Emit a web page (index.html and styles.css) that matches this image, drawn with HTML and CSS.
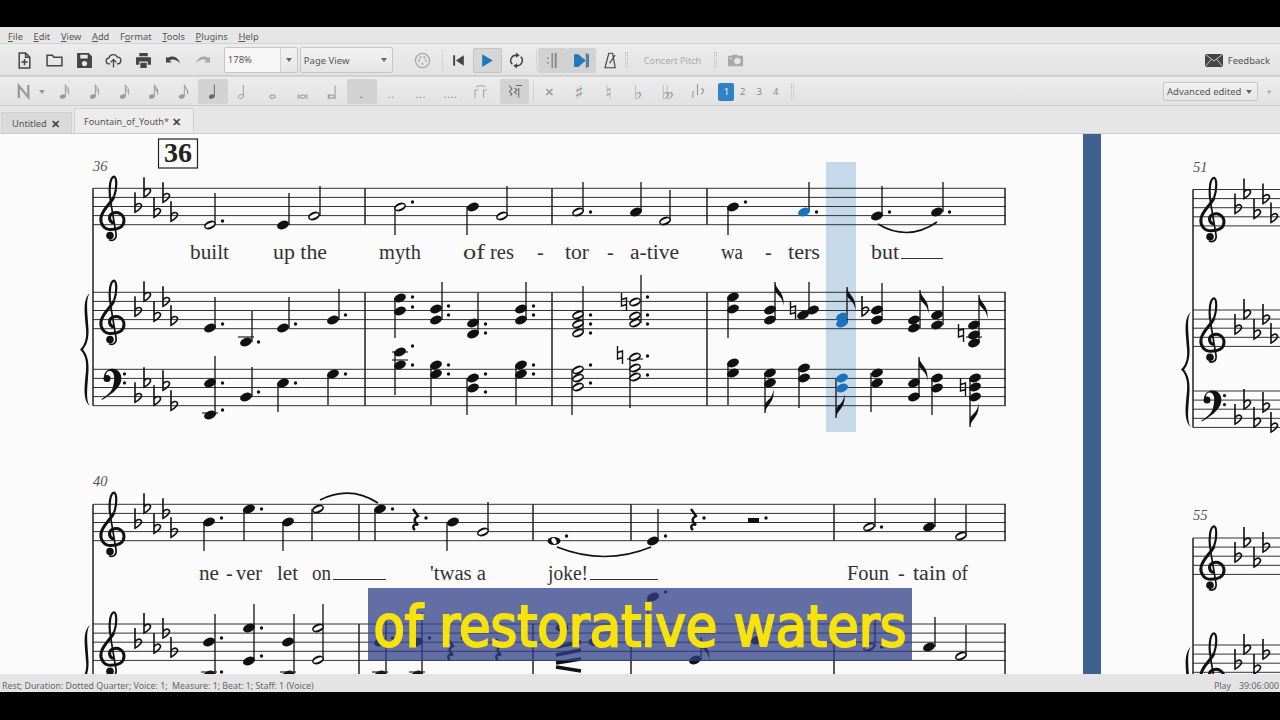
FILE: index.html
```html
<!DOCTYPE html>
<html lang="en">
<head>
    <meta charset="UTF-8">
    <title>Fountain_of_Youth</title>
    <link rel="stylesheet" href="styles.css">
</head>
<body>
    <!-- shared note parts for the palette icons -->
    <svg class="defs" width="0" height="0">
        <symbol id="q" viewBox="0 0 16 20"><ellipse cx="6" cy="16" rx="3.4" ry="2.5" transform="rotate(-20 6 16)" fill="currentColor"/><path d="M9 16V2" stroke="currentColor" stroke-width="1.1"/></symbol>
        <symbol id="h" viewBox="0 0 16 20"><ellipse cx="6" cy="16" rx="3.2" ry="2.2" transform="rotate(-20 6 16)" fill="none" stroke="currentColor"/><path d="M9 16V2" stroke="currentColor" stroke-width="1.1"/></symbol>
        <symbol id="f1" viewBox="0 0 16 20"><path d="M9 2c0 4 5 5 4 11" fill="none" stroke="currentColor" stroke-width="1.4"/></symbol>
        <symbol id="f2" viewBox="0 0 16 20"><path d="M9 2c0 3 5 4 4 9M9 5c0 3 5 4 4 9" fill="none" stroke="currentColor" stroke-width="1.2"/></symbol>
        <symbol id="f3" viewBox="0 0 16 20"><path d="M9 2c0 3 5 3 4 7M9 4.500c0 3 5 3 4 7M9 7c0 3 5 3 4 7" fill="none" stroke="currentColor"/></symbol>
        <symbol id="f4" viewBox="0 0 16 20"><path d="M9 2c0 2 5 3 4 6M9 4c0 2 5 3 4 6M9 6c0 2 5 3 4 6M9 8c0 2 5 3 4 6" fill="none" stroke="currentColor" stroke-width=".9"/></symbol>
    </svg>

    <div class="app">
        <div class="menuBar">
            <span><u>F</u>ile</span>
            <span><u>E</u>dit</span>
            <span><u>V</u>iew</span>
            <span><u>A</u>dd</span>
            <span>F<u>o</u>rmat</span>
            <span><u>T</u>ools</span>
            <span><u>P</u>lugins</span>
            <span><u>H</u>elp</span>
        </div>

        <div class="toolBar fileBar">
            <div class="group fileTools">
                <span class="tool"><svg viewBox="0 0 16 16"><path class="line" d="M3 1h6l4 4v10H3zM9 1v4h4M8 6.5v6M5 9.5h6"/></svg></span>
                <span class="tool"><svg viewBox="0 0 16 16"><path class="line" d="M1 3h5l1.5 2H15v8H1z"/></svg></span>
                <span class="tool"><svg viewBox="0 0 16 16"><path class="solid" fill-rule="evenodd" d="M1 1h11l3 3v11H1zM4 2.5V6h7V2.500zM8 8.500a2.500 2.500 0 1 0 .01 0z"/></svg></span>
                <span class="tool"><svg viewBox="0 0 18 16"><path class="line" d="M5.500 11.500H4.500a3 3 0 0 1-.5-6 4.800 4.800 0 0 1 9-1 3.500 3.500 0 0 1 .5 7h-1M9 15.500V7.500M6 10l3-3 3 3"/></svg></span>
                <span class="tool"><svg viewBox="0 0 16 16"><path class="solid" d="M4 1h8v3H4zM1 5h14v7h-3V9H4v3H1zM5 10h6v5H5z"/></svg></span>
                <span class="tool"><svg viewBox="0 0 18 16"><path class="solid" d="M1 4v6h6L5 8c3-2 7-1 11 3-2-7-8-9-13-6z"/></svg></span>
                <span class="tool off"><svg viewBox="0 0 18 16"><path class="solid" d="M17 4v6h-6l2-2C10 6 6 7 2 11c2-7 8-9 13-6z"/></svg></span>
            </div>
            <div class="combo zoomCombo"><span class="comboText">178%</span><span class="comboArrow"></span></div>
            <div class="combo viewCombo"><span class="comboText">Page View</span><span class="comboArrow"></span></div>
            <span class="tool midi off"><svg viewBox="0 0 18 18"><circle class="line" cx="9" cy="9" r="7.5"/><path class="solid" d="M4.500 8h2v2h-2zM11.500 8h2v2h-2zM6 4.500h2v2H6zM10 4.500h2v2h-2zM8 11.500h2v2H8z"/></svg></span>
            <i class="sep"></i>
            <span class="tool"><svg viewBox="0 0 16 16"><path class="solid" d="M3 3h1.800v10H3zM13 3v10L5.500 8z"/></svg></span>
            <span class="tool boxed"><svg viewBox="0 0 16 16"><path class="blue" d="M3 2l10 6-10 6z"/></svg></span>
            <span class="tool"><svg viewBox="0 0 16 16"><path class="line" d="M4 11.500A5 5 0 0 1 8 3M12 4.500A5 5 0 0 1 8 13"/><path class="solid" d="M7.500 .5L11 3 7.500 5.500zM8.500 10.500L5 13l3.500 2.500z"/></svg></span>
            <i class="sep"></i>
            <span class="tool pressed"><svg viewBox="0 0 16 16"><path class="grey" d="M3 5h1.500v1.500H3zM3 9.500h1.500V11H3zM7 1h1.500v14H7zM10 1h2v14h-2z"/></svg></span>
            <span class="tool pressed"><svg viewBox="0 0 16 16"><path class="blue" d="M1 2h4l7 6-7 6H1z"/><path class="solid" d="M12 1h1.500v14H12z"/><path class="blue" d="M13.500 2H15v12h-1.500z"/></svg></span>
            <span class="tool"><svg viewBox="0 0 16 20"><path class="line" d="M6 1.500h4.500l3 17h-12zM13.500 3.500L7 13"/></svg></span>
            <i class="handle"></i>
            <span class="pitchLabel">Concert Pitch</span>
            <i class="handle"></i>
            <span class="tool off cameraTool"><svg viewBox="0 0 18 16"><path class="solid" fill-rule="evenodd" d="M1 3h4l1-1h5l1 1h5v11H1zM11 5a3.500 3.500 0 1 0 .01 0zM3 5v1.500h2V5z"/></svg></span>
            <div class="feedback">
                <svg viewBox="0 0 18 13"><path class="solid" d="M0 0h18v13H0z"/><path class="crossing" d="M0 0l9 7 9-7M0 13l6.500-8M18 13l-6.500-8"/></svg>
                <span>Feedback</span>
            </div>
        </div>

        <div class="toolBar noteBar">
            <span class="tool inputTool"><svg viewBox="0 0 18 18"><path class="noteN" d="M3 16V3l10 12V2"/></svg></span>
            <span class="miniArrow"></span>
            <div class="group noteTools">
                <span class="tool"><svg viewBox="0 0 16 20"><use href="#q"/><use href="#f4"/></svg></span>
                <span class="tool"><svg viewBox="0 0 16 20"><use href="#q"/><use href="#f3"/></svg></span>
                <span class="tool"><svg viewBox="0 0 16 20"><use href="#q"/><use href="#f3"/></svg></span>
                <span class="tool"><svg viewBox="0 0 16 20"><use href="#q"/><use href="#f2"/></svg></span>
                <span class="tool"><svg viewBox="0 0 16 20"><use href="#q"/><use href="#f1"/></svg></span>
                <span class="tool pressed"><svg viewBox="0 0 16 20"><use href="#q"/></svg></span>
                <span class="tool"><svg viewBox="0 0 16 20"><use href="#h"/></svg></span>
                <span class="tool"><svg viewBox="0 0 16 20"><ellipse class="thin" cx="8" cy="16" rx="3.2" ry="1.9"/></svg></span>
                <span class="tool"><svg viewBox="0 0 16 20"><ellipse class="thin" cx="8" cy="16" rx="3.2" ry="1.9"/><path class="thin" d="M3 13v6M13 13v6"/></svg></span>
                <span class="tool"><svg viewBox="0 0 16 20"><ellipse class="thin" cx="7" cy="16" rx="3.2" ry="1.9"/><path class="thin" d="M3 13v6M11 3v16"/></svg></span>
                <span class="tool pressed"><b class="dots">.</b></span>
                <span class="tool"><b class="dots">..</b></span>
                <span class="tool"><b class="dots">...</b></span>
                <span class="tool"><b class="dots">....</b></span>
                <span class="tool"><svg viewBox="0 0 22 20"><path class="thin" d="M4 18V8h4M15 18V8h4M5 4c4-2 9-2 13 0"/></svg></span>
            </div>
            <span class="tool pressed restTool"><svg viewBox="0 0 20 18"><path class="thin" d="M4 2l3 4-3 3 3 3-2 2M10 5l3 2-3 3 3 2M12 2h7M15 5v11"/></svg></span>
            <i class="sep"></i>
            <div class="group noteTools">
                <span class="tool"><span class="accidental small">×</span></span>
                <span class="tool"><span class="accidental">♯</span></span>
                <span class="tool"><span class="accidental">♮</span></span>
                <span class="tool"><span class="accidental">♭</span></span>
                <span class="tool"><span class="accidental tight">♭♭</span></span>
                <span class="tool"><svg viewBox="0 0 18 18"><path class="thin" d="M4 10v6M4 10l1.5-1M9 1v12M13 6c3 0 3 4 0 6"/></svg></span>
            </div>
            <div class="voices">
                <span class="voice current">1</span>
                <span class="voice">2</span>
                <span class="voice">3</span>
                <span class="voice">4</span>
            </div>
            <i class="handle"></i>
            <div class="combo workspaceCombo"><span class="comboText">Advanced edited</span><span class="comboArrow"></span></div>
            <span class="plus">+</span>
        </div>

        <div class="tabBar">
            <div class="tab">Untitled <span class="close">✕</span></div>
            <div class="tab active">Fountain_of_Youth* <span class="close">✕</span></div>
        </div>

        <div class="score">
            <svg class="sheet" width="1280" height="540" viewBox="0 134 1280 540">
                <!-- playback cursor and page gap -->
                <rect class="cursor" x="826" y="162" width="30" height="270"/>
                <rect class="pageGap" x="1083" y="134" width="18" height="540"/>

                <g id="music"></g>

                <rect class="rehearsal" x="158.5" y="139" width="39" height="29"/>
                <text class="rehearsalNum" x="178" y="162" text-anchor="middle">36</text>
                <text class="measureNum" x="93" y="170.5">36</text>
                <text class="measureNum" x="93" y="486">40</text>
                <text class="measureNum" x="1193" y="172">51</text>
                <text class="measureNum" x="1193" y="520">55</text>

                <g class="lyrics">
                    <text x="190" y="258.5" textLength="39" lengthAdjust="spacingAndGlyphs">built</text>
                    <text x="273" y="258.5" textLength="54" lengthAdjust="spacingAndGlyphs">up the</text>
                    <text x="379" y="258.5" textLength="42" lengthAdjust="spacingAndGlyphs">myth</text>
                    <text x="463" y="258.5" textLength="22" lengthAdjust="spacingAndGlyphs">of</text>
                    <text x="490" y="258.5" textLength="24" lengthAdjust="spacingAndGlyphs">res</text>
                    <text x="537" y="258.5">-</text>
                    <text x="565" y="258.5" textLength="24" lengthAdjust="spacingAndGlyphs">tor</text>
                    <text x="607" y="258.5">-</text>
                    <text x="630" y="258.5" textLength="49" lengthAdjust="spacingAndGlyphs">a-tive</text>
                    <text x="721" y="258.5" textLength="22" lengthAdjust="spacingAndGlyphs">wa</text>
                    <text x="765" y="258.5">-</text>
                    <text x="788" y="258.5" textLength="32" lengthAdjust="spacingAndGlyphs">ters</text>
                    <text x="871" y="258.5" textLength="28" lengthAdjust="spacingAndGlyphs">but</text>

                    <text x="199" y="580" textLength="20" lengthAdjust="spacingAndGlyphs">ne</text>
                    <text x="226" y="580">-</text>
                    <text x="236" y="580" textLength="26" lengthAdjust="spacingAndGlyphs">ver</text>
                    <text x="277" y="580" textLength="21" lengthAdjust="spacingAndGlyphs">let</text>
                    <text x="312" y="580" textLength="19" lengthAdjust="spacingAndGlyphs">on</text>
                    <text x="430" y="580" textLength="56" lengthAdjust="spacingAndGlyphs">'twas a</text>
                    <text x="548" y="580" textLength="40" lengthAdjust="spacingAndGlyphs">joke!</text>
                    <text x="847" y="580" textLength="42" lengthAdjust="spacingAndGlyphs">Foun</text>
                    <text x="898" y="580">-</text>
                    <text x="913" y="580" textLength="33" lengthAdjust="spacingAndGlyphs">tain</text>
                    <text x="952" y="580" textLength="16" lengthAdjust="spacingAndGlyphs">of</text>
                </g>
                <path class="extender" d="M901 258.500h42M333 579.500h53M590 579.500h68"/>
            </svg>

            <div class="caption"><span>of restorative waters</span></div>
        </div>

        <div class="statusBar">
            <span>Rest; Duration: Dotted Quarter; Voice: 1;&nbsp; Measure: 1; Beat: 1; Staff: 1 (Voice)</span>
            <span class="playState">Play</span>
            <span>39:06:000</span>
        </div>
    </div>

    <script src="score.js"></script>
</body>
</html>
```

FILE: styles.css
```css
* {
    box-sizing: border-box;
}

body {
    margin: 0;
    background-color: #000;
    font-family: "Noto Sans", sans-serif;
    overflow: hidden;
}

.defs {
    position: absolute;
}

.app {
    display: flex;
    flex-direction: column;
    height: 665px;
    margin-top: 27px;
    background-color: #e6e6e6;
}

.menuBar {
    display: flex;
    align-items: center;
    gap: 10.7px;
    height: 16px;
    padding: 2px 0 0 8px;
    font-size: 9.3px;
    color: #555;
}

.toolBar {
    display: flex;
    align-items: center;
    background: linear-gradient(#ececec, #e2e2e2);
    border-top: 1px solid #d4d4d4;
    border-bottom: 1px solid #cdcdcd;
}

.fileBar {
    height: 33px;
    padding: 1px 0 0 10px;
}

.noteBar {
    height: 30px;
    padding: 1px 0 0 10px;
}

.group {
    display: flex;
    align-items: center;
}

.tool {
    display: flex;
    flex: none;
    justify-content: center;
    align-items: center;
    width: 29px;
    height: 25px;
    color: #444;
    border-radius: 2px;
}

.tool svg {
    width: 17px;
    height: 17px;
}

.fileTools .tool,
.noteTools .tool {
    width: 29.7px;
}

.off {
    color: #a9a9a9;
}

.boxed {
    background-color: #d6d6d6;
    border: 1px solid #c4c4c4;
}

.pressed {
    background-color: #d2d2d2;
    color: #777;
}

.line {
    fill: none;
    stroke: currentColor;
    stroke-width: 1.4;
}

.solid {
    fill: currentColor;
}

.crossing {
    fill: none;
    stroke: #e6e6e6;
    stroke-width: .8;
}

.blue {
    fill: #1f78b8;
}

.grey {
    fill: #8c8c8c;
}

.sep {
    flex: none;
    width: 1px;
    height: 20px;
    margin: 0 1px 0 5px;
    background-color: #d2d2d2;
}

.handle {
    flex: none;
    width: 3px;
    height: 16px;
    border-left: 1px dotted #bbb;
    border-right: 1px dotted #bbb;
}

.combo {
    display: flex;
    flex: none;
    align-items: center;
    background: linear-gradient(#f1f1f1, #e6e6e6);
    border: 1px solid #c6c6c6;
    border-radius: 2px;
    font-size: 9.5px;
    color: #555;
}

.comboText {
    flex: 1;
    padding-left: 3px;
}

.comboArrow {
    width: 0;
    height: 0;
    margin-right: 5px;
    border-left: 3px solid transparent;
    border-right: 3px solid transparent;
    border-top: 4px solid #666;
}

.zoomCombo {
    width: 74px;
    height: 26px;
    margin-left: 6px;
}

.zoomCombo .comboText {
    height: 100%;
    line-height: 23px;
    margin-right: 5px;
    background-color: #f6f6f6;
    border-right: 1px solid #d0d0d0;
}

.viewCombo {
    width: 93px;
    height: 26px;
    margin-left: 2px;
}

.midi {
    margin-left: 15px;
}

.pitchLabel {
    margin: 0 13px 0 16px;
    font-size: 9.2px;
    color: #aaa;
}

.cameraTool {
    margin-left: 4px;
}

.feedback {
    display: flex;
    align-items: center;
    gap: 5px;
    margin-left: auto;
    padding-right: 10px;
    font-size: 9.5px;
    color: #555;
}

.feedback svg {
    width: 18px;
    height: 13px;
    color: #444;
}

.inputTool {
    width: 29px;
}

.noteN {
    fill: none;
    stroke: #999;
    stroke-width: 2.4;
}

.miniArrow {
    flex: none;
    width: 0;
    height: 0;
    margin-right: 5px;
    border-left: 3px solid transparent;
    border-right: 3px solid transparent;
    border-top: 4px solid #999;
}

.thin {
    fill: none;
    stroke: currentColor;
    stroke-width: 1.2;
}

.noteBar .tool {
    color: #999;
}

.noteBar .pressed {
    color: #666;
}

.noteBar .sep {
    margin: 0 0 0 4px;
}

.dots {
    align-self: flex-end;
    margin-bottom: 3px;
    font-size: 9px;
    letter-spacing: 1px;
    line-height: 12px;
}

.accidental {
    font-family: "DejaVu Sans", sans-serif;
    font-size: 19px;
}

.tight {
    margin-left: -5px;
    letter-spacing: -5px;
}

.small {
    font-size: 12px;
    font-weight: bold;
}

.restTool {
    margin-left: 5px;
}

.voices {
    display: flex;
    margin: 0 7px 0 6px;
}

.voice {
    width: 16.5px;
    height: 18px;
    line-height: 18px;
    text-align: center;
    font-size: 9.5px;
    color: #888;
}

.current {
    width: 16px;
    background-color: #2f82c4;
    border-radius: 2px;
    color: #e8f2fa;
}

.workspaceCombo {
    width: 95px;
    height: 19px;
    margin-left: auto;
}

.plus {
    width: 22px;
    text-align: center;
    font-size: 9px;
    color: #888;
}

.tabBar {
    display: flex;
    align-items: flex-end;
    gap: 2px;
    height: 28px;
    padding-left: 1px;
    border-bottom: 1px solid #cbcbcb;
    font-size: 9.2px;
    color: #555;
}

.tab {
    display: flex;
    justify-content: space-between;
    align-items: center;
    width: 71px;
    height: 21px;
    padding: 0 11px 0 10px;
    background-color: #dadada;
    border: 1px solid #d0d0d0;
    border-bottom: none;
}

.active {
    width: 120px;
    height: 25px;
    padding: 0 12px 0 9px;
    background-color: #ececec;
}

.close {
    font-size: 11px;
    font-weight: bold;
    color: #444;
}

.score {
    position: relative;
    flex: none;
    width: 1280px;
    height: 540px;
    background-color: #fbfbfb;
}

.sheet {
    display: block;
}

.cursor {
    fill: #c5d9ea;
}

.pageGap {
    fill: #3e618f;
}

.rehearsal {
    fill: none;
    stroke: #222;
    stroke-width: 1.2;
}

.rehearsalNum {
    font-family: "Liberation Serif", serif;
    font-size: 28px;
    font-weight: bold;
    fill: #222;
}

.measureNum {
    font-family: "Liberation Serif", serif;
    font-size: 14.5px;
    font-style: italic;
    fill: #555;
}

.lyrics {
    font-family: "Liberation Serif", serif;
    font-size: 20px;
    fill: #333;
}

.extender {
    stroke: #333;
    stroke-width: 1;
}

.caption {
    position: absolute;
    top: 454px;
    left: 368px;
    display: flex;
    justify-content: center;
    align-items: center;
    width: 544px;
    height: 73px;
    padding-top: 3px;
    background-color: rgba(48, 64, 135, 0.75);
    font-family: "DejaVu Sans", sans-serif;
    font-size: 57px;
    font-stretch: condensed;
    line-height: 70px;
    white-space: nowrap;
    color: #f8e20c;
    -webkit-text-stroke: 2px #f8e20c;
}

.statusBar {
    display: flex;
    align-items: center;
    height: 18px;
    padding: 5px 1px 0 2px;
    background-color: #e4e4e4;
    font-size: 8.8px;
    color: #666;
}

.playState {
    margin-left: auto;
    margin-right: 8px;
}
```

FILE: score.js
```js
// Draws staves and notes into the sheet, everything in screen coordinates
const GAP = 9.1;
const INK = "#111";
const BLUE = "#1b73bd";
let out = "";

function staff(x1, x2, top) {
    for (let i = 0; i < 5; i++) {
        const y = top + i * GAP;
        out += `<path d="M${x1} ${y}H${x2}" stroke="#333" stroke-width="1"/>`;
    }
}

function bar(x, y1, y2, w = 1.5) {
    out += `<path d="M${x} ${y1}V${y2}" stroke="#222" stroke-width="${w}"/>`;
}

function treble(x, top) {
    const y = top + 3 * GAP;
    out += `<g transform="translate(${x} ${y})" fill="none" stroke="${INK}">
        <path stroke-width="3" d="M1 7C-4 7-5 0-1-2C5-5 11-1 11 5C11 12 4 14-2 14C-9 14-13 8-12 2C-11-6-2-12 1-19"/>
        <path stroke-width="2.2" d="M1-19C4-27 4-38 1-39C-3-38-4-28-3-18"/>
        <path stroke-width="1.7" d="M-3-18L3 18C4 24-1 26-4 24"/>
        <circle cx="-3" cy="20" r="3.8" fill="${INK}" stroke="none"/></g>`;
}

function bass(x, top) {
    const y = top + GAP;
    out += `<g transform="translate(${x} ${y})">
        <path d="M1-1C1-9 9-11 13-9C20-6 20 4 14 10C10 15 4 18-1 21.5L-1.5 20.5C4 17 9 13 10 8C12 1 12-7 7-7.5C4-7.8 3-5 3-3Z" fill="${INK}"/>
        <circle cx="4" cy="0" r="3.5" fill="${INK}"/>
        <circle cx="21.5" cy="-4.5" r="1.6" fill="${INK}"/><circle cx="21.5" cy="4.5" r="1.6" fill="${INK}"/></g>`;
}

function flat(x, y) {
    out += `<path d="M${x - 3} ${y - 15}V${y + 5}C${x + 1} ${y + 3} ${x + 5} ${y - 1} ${x + 3} ${y - 3}C${x + 1} ${y - 5} ${x - 2} ${y - 3} ${x - 3} ${y - 1}" fill="none" stroke="${INK}" stroke-width="1.6"/>`;
}

function keySig(x0, top, isBass, count = 5) {
    const xs = [45, 54, 64, 73, 81];
    const ys = isBass ? [28, 13, 31, 16, 36] : [19, 4, 24, 9, 28];
    for (let i = 0; i < count; i++) flat(x0 + xs[i], top + ys[i]);
}

function natural(x, y) {
    out += `<path d="M${x - 2.5} ${y - 9}V${y + 4}L${x + 2.5} ${y + 2.5}M${x + 2.5} ${y + 9}V${y - 4}L${x - 2.5} ${y - 2.5}" fill="none" stroke="${INK}" stroke-width="1.4"/>`;
}

// kind: "q" filled, "h" half, "w" whole
function head(x, y, kind, color) {
    if (kind == "w") {
        out += `<ellipse cx="${x}" cy="${y}" rx="6.5" ry="4" fill="${color}"/>
            <ellipse cx="${x}" cy="${y}" rx="2.2" ry="3.3" transform="rotate(-30 ${x} ${y})" fill="#fbfbfb"/>`;
        return;
    }
    out += `<ellipse cx="${x}" cy="${y}" rx="6.2" ry="4" transform="rotate(-22 ${x} ${y})" fill="${color}"/>`;
    if (kind == "h") {
        out += `<ellipse cx="${x}" cy="${y}" rx="4.8" ry="1.9" transform="rotate(-25 ${x} ${y})" fill="#fbfbfb"/>`;
    }
}

function dot(x, y) {
    out += `<circle cx="${x}" cy="${y}" r="1.7" fill="${INK}"/>`;
}

// heads at x, stem from stemX to stemEnd, dots given by their y
function note(x, ys, stemX, stemEnd, dots = [], kind = "q", color = INK) {
    if (stemX) {
        const near = stemEnd < ys[0] ? Math.max(...ys) : Math.min(...ys);
        out += `<path d="M${stemX} ${near}V${stemEnd}" stroke="${INK}" stroke-width="1.3"/>`;
    }
    ys.forEach(y => head(x, y, kind, color));
    dots.forEach(y => dot(x + 12.5, y));
}

function flag(x, y, dir) {
    out += `<path d="M${x} ${y}C${x + 1} ${y + dir * 8} ${x + 10} ${y + dir * 10} ${x + 8.5} ${y + dir * 24}C${x + 8} ${y + dir * 15} ${x + 2} ${y + dir * 13} ${x} ${y + dir * 9}Z" fill="${INK}"/>`;
}

function ledger(x, y, half = 8) {
    out += `<path d="M${x - half} ${y}H${x + half}" stroke="#222" stroke-width="1.2"/>`;
}

function rest(x, y) {
    out += `<path d="M${x - 2} ${y - 11}L${x + 3} ${y - 4}C${x - 2} ${y - 1} ${x - 1} ${y + 1} ${x + 3} ${y + 5}C${x - 2} ${y + 3} ${x - 3} ${y + 8} ${x} ${y + 10}" fill="none" stroke="${INK}" stroke-width="2.4"/>`;
}

function tie(d) {
    out += `<path d="${d}" fill="none" stroke="${INK}" stroke-width="1.6"/>`;
}

function brace(x, y, h) {
    const s = h / 113;
    out += `<path transform="translate(${x} ${y}) scale(1 ${s})" d="M10 0C2 6 5 22 6 36C7 46 4 53 0 56.5C4 60 7 67 6 77C5 91 2 107 10 113C5 107 8 91 8.5 77C9 66 6 60 3 56.5C6 53 9 47 8.5 36C8 22 5 6 10 0Z" fill="${INK}"/>`;
}

function systemHead(x0, tops, kinds, count) {
    tops.forEach((top, i) => {
        if (kinds[i] == "b") bass(x0 + 10, top);
        else treble(x0 + 20, top);
        keySig(x0, top, kinds[i] == "b", count);
    });
}

/* ---------- first system, bars 36-39 ---------- */
const V1 = 188.3, P1 = 292.3, B1 = 369.3;
staff(93, 1006, V1);
staff(93, 1006, P1);
staff(93, 1006, B1);
bar(93, V1, B1 + 36.4);
[365, 552, 707, 1005].forEach(x => {
    bar(x, V1, V1 + 36.4);
    bar(x, P1, B1 + 36.4);
});
brace(80, 293, 113);
systemHead(93, [V1, P1, B1], ["t", "t", "b"]);

// voice
note(210, [225], 215, 193, [221], "h");
note(283, [225], 289, 193);
note(314, [216], 320, 186, [], "h");
note(400, [207], 395, 235, [202], "h");
note(473, [207], 467, 235);
note(502, [216], 507, 186, [], "h");
note(578, [212], 583, 182, [212], "h");
note(636, [212], 641, 182);
note(665, [221], 670, 190, [], "h");
note(733, [207], 728, 235, [202]);
note(804, [212], 809, 182, [212], "q", BLUE);
note(877, [216], 882, 186, [212]);
note(937, [212], 943, 182, [212]);
tie("M878 224Q908 242 937 222");

// piano right hand
note(210, [328], 215, 297, [324]);
ledger(246, 337);
note(246, [342], 252, 311, [342]);
note(283, [328], 289, 297, [324]);
note(333, [320], 339, 289, [315]);
note(400, [298, 311], 395, 338, [297, 307]);
note(436, [309, 320], 442, 282, [306, 315]);
note(473, [323, 334], 478, 293, [324, 333]);
note(521, [309, 320], 526, 282, [306, 315]);
note(578, [315, 324, 333], 583, 286, [315, 324, 333], "h");
natural(624, 302);
note(635, [302, 316, 323], 641, 275, [297, 315, 324], "h");
note(733, [297, 309], 728, 338);
note(770, [310, 320], 775, 282);
flag(775, 282, 1);
natural(793, 310);
note(803, [315], 0, 0);
note(813, [310], 809, 282);
note(842, [317, 323], 847, 287, [], "q", BLUE);
flag(847, 287, 1);
flat(865, 311);
note(877, [310, 320], 882, 283);
note(914, [320, 328], 920, 290);
flag(920, 290, 1);
note(937, [315, 325], 943, 286);
natural(961, 333);
ledger(974, 337);
note(974, [325, 335, 343], 979, 295);
flag(979, 295, 1);

// piano left hand
ledger(210, 413);
note(210, [383, 415], 215, 356, [383, 410]);
note(246, [397], 252, 367, [392]);
note(283, [383], 278, 412, [383]);
note(333, [374], 328, 405, [374]);
ledger(400, 352);
ledger(400, 360);
note(400, [352, 365], 395, 395, [346, 365]);
note(436, [365, 374], 431, 405, [365, 374]);
note(473, [378, 388], 467, 415, [374, 392]);
note(521, [365, 374], 516, 405, [365, 374]);
note(578, [370, 378, 387], 572, 415, [365, 383], "h");
natural(620, 355);
ledger(635, 359);
note(635, [357, 368, 377], 630, 408, [356, 375], "h");
note(733, [363, 373], 728, 405);
note(770, [373, 383], 765, 413);
flag(765, 413, -1);
note(804, [368, 378], 799, 408);
note(842, [378, 388], 836, 418, [], "q", BLUE);
flag(836, 418, -1);
note(877, [373, 383], 871, 412);
note(914, [383, 397], 919, 357);
flag(919, 357, 1);
note(937, [378, 388], 932, 415);
natural(963, 387);
note(975, [378, 387, 397], 970, 427);
flag(970, 427, -1);

/* ---------- second system, bars 40-45 ---------- */
const V2 = 504.3, P2 = 624;
staff(93, 1006, V2);
staff(93, 1006, P2);
bar(93, V2, 674);
[359, 533, 631, 834, 1005].forEach(x => {
    bar(x, V2, V2 + 36.4);
    bar(x, P2, 674);
});
brace(80, 625, 113);
systemHead(93, [V2, P2], ["t", "t"]);

// voice
note(209, [522], 204, 551, [518]);
note(249, [509], 244, 541, [509]);
note(288, [522], 283, 551);
note(318, [509], 312, 541, [], "h");
tie("M320 500Q350 485 378 503");
note(380, [509], 375, 541, [509]);
rest(415, 520);
dot(426, 518);
note(453, [522], 447, 551);
note(483, [532], 488, 502, [], "h");
note(554, [541], 0, 0, [536], "w");
tie("M557 547Q605 566 651 547");
note(653, [541], 658, 509, [536]);
rest(693, 520);
dot(704, 518);
out += `<rect x="748" y="518" width="11" height="5" fill="${INK}"/>`;
dot(766, 518);
note(869, [527], 875, 498, [527], "h");
note(929, [527], 935, 498);
note(961, [536], 966, 505, [], "h");

// piano, mostly behind the caption
note(209, [642, 675], 215, 614, [638, 672]);
ledger(209, 672);
note(249, [628, 661], 254, 604, [628, 656]);
note(288, [642, 675], 294, 614);
ledger(288, 672);
note(318, [628, 660], 323, 604, [], "h");
note(380, [642, 675], 386, 614, [638]);
ledger(380, 672);
note(417, [642, 675], 422, 612, [638]);
ledger(417, 672);
rest(450, 650);
dot(462, 638);
rest(498, 650);
dot(510, 638);
note(562, [628], 0, 0, [], "w");
note(595, [642], 0, 0, [], "w");
out += `<path d="M556 647L581 642M556 655L581 650M556 663L581 659M556 667L581 671" stroke="${INK}" stroke-width="3.5"/>`;
note(653, [597], 648, 618, [592]);
note(695, [660], 701, 637);
flag(701, 637, 1);
note(757, [640], 0, 0);
note(869, [647], 875, 617, [647], "h");
note(929, [647], 935, 617);
note(961, [656], 966, 625, [], "h");

/* ---------- next page, cut off by the window ---------- */
const tops = [189.5, 310, 391];
tops.forEach(top => staff(1193, 1280, top));
bar(1193, 189.5, 427.4);
brace(1181, 312, 115);
systemHead(1193, tops, ["t", "t", "b"]);

staff(1193, 1280, 538);
staff(1193, 1280, 645);
bar(1193, 538, 674);
brace(1181, 647, 115);
systemHead(1193, [538, 645], ["t", "t"], 4);

document.getElementById("music").innerHTML = out;
```
